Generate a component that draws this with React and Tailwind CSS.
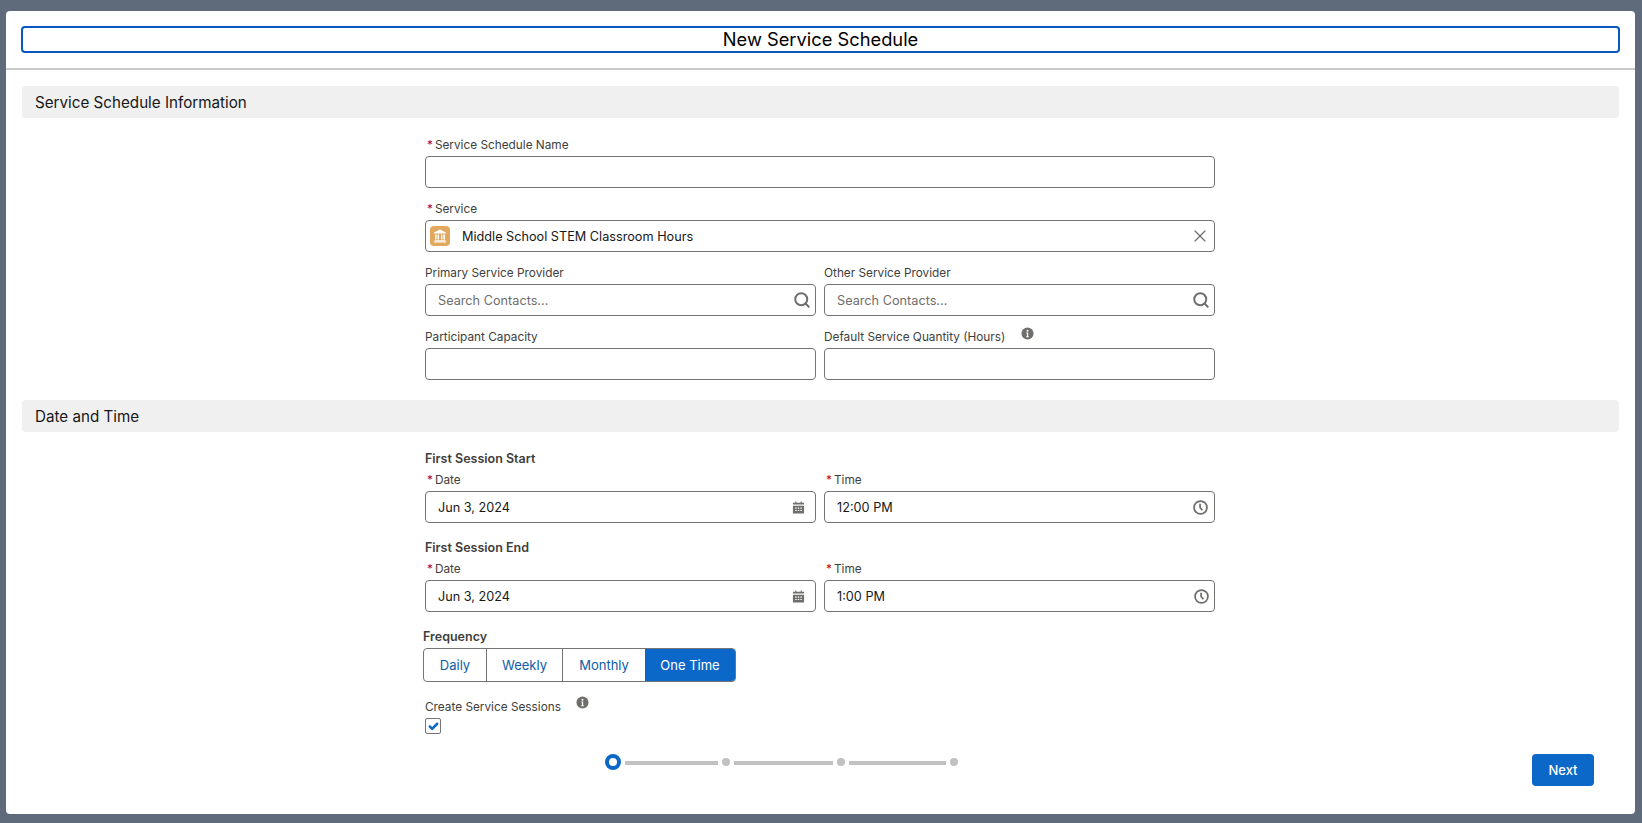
import React from 'react';
import { Search, X, Check } from 'lucide-react';

const InfoIcon = () => (
    <svg viewBox="0 0 14 14" className="w-[13px] h-[13px]">
        <circle cx="7" cy="7" r="6.5" fill="#706e6b" />
        <circle cx="7" cy="4" r="1" fill="#fff" />
        <path d="M5.7 6h2v4h.7v1H5.6v-1h.8V7h-.7z" fill="#fff" />
    </svg>
);

const CalendarIcon = () => (
    <svg viewBox="0 0 14 14" className="w-[13px] h-[13px] mr-[8px] shrink-0">
        <path d="M3.5 0.5h1.2v1.3h4.6V0.5h1.2v1.3H13v2H1v-2h2.5z" fill="#706e6b" />
        <path fillRule="evenodd" d="M1 5h12v8.5H1zM3.5 7v1.3h1.6V7zm2.8 0v1.3h1.5V7zm2.7 0v1.3h1.6V7zM3.5 9.6v1.3h1.6V9.6zm2.8 0v1.3h1.5V9.6zm2.7 0v1.3h1.6V9.6z" fill="#706e6b" />
    </svg>
);

const ClockIcon = () => (
    <svg viewBox="0 0 14 14" className="w-[15px] h-[15px]" fill="none" stroke="#706e6b" strokeWidth="1.6">
        <circle cx="7" cy="7" r="6" />
        <path d="M6.6 3.4V7l2.2 2.6" />
    </svg>
);

const BuildingIcon = () => (
    <svg viewBox="0 0 14 14" className="w-[14px] h-[14px]" fill="#fff">
        <path d="M7 0.5L13 3.5V4.6H1V3.5z" />
        <path d="M2 5.4h1.6v5.2H2zM4.6 5.4h1.4v5.2H4.6zM8 5.4h1.4v5.2H8zM10.4 5.4H12v5.2h-1.6z" />
        <path d="M1.5 11.2h11v1H1.5zM0.8 12.6h12.4v1H0.8z" />
    </svg>
);

const Field = ({ label, required, info, children, className = '' }) => (
    <div className={className}>
        <div className="h-[22px] pt-[2px] flex items-center text-[11.8px] text-[#3e3e3c] leading-none">
            {required && <span className="text-[#ba0517] mr-[2px] ml-[2px]">*</span>}
            <span>{label}</span>
            {info && <span className="ml-[16px] -mt-[10px]"><InfoIcon /></span>}
        </div>
        {children}
    </div>
);

const Input = ({ value, placeholder, right }) => (
    <div className="h-[32px] flex items-center justify-between border border-[#747474] rounded-[4px] bg-white pl-[12px] pr-[5px] text-[12.7px] text-[#181818]">
        {value && <span className="pt-[1px]">{value}</span>}
        {placeholder && <span className="pt-[1px] text-[#706e6b]">{placeholder}</span>}
        <span />
        {right && <span className="flex items-center justify-center w-[16px]">{right}</span>}
    </div>
);

const SectionHeader = ({ title, className = '' }) => (
    <div className={`mx-[16px] h-[32px] pt-[2px] flex items-center rounded-[4px] bg-[#f0f0f0] pl-[13px] text-[15.2px] text-[#181818] ${className}`}>
        {title}
    </div>
);

const Step = () => <span className="w-[8px] h-[8px] rounded-full bg-[#c1c1c1]" />;
const Line = ({ w }) => <span className={`h-[4px] mt-[1px] bg-[#c1c1c1] ${w}`} />;

export default function App() {
    return (
        <div className="h-screen bg-[#5f6b7a] pt-[11px] pb-[9px] pl-[6px] pr-[7px] font-['Inter',sans-serif]">
            <div className="relative h-full bg-white rounded-[4px]">
                <div className="h-[59px] pt-[15px] px-[15px] border-b-2 border-[#c9c9c9]">
                    <div className="h-[27px] pt-[1px] flex items-center justify-center border-2 border-[#0b57c0] rounded-[4px] text-[18.3px] text-black">
                        New Service Schedule
                    </div>
                </div>

                <SectionHeader title="Service Schedule Information" className="mt-[16px]" />
                <div className="w-[790px] ml-[419px] mt-[16px]">
                    <Field label="Service Schedule Name" required className="mb-[10px]">
                        <Input />
                    </Field>
                    <Field label="Service" required className="mb-[10px]">
                        <div className="h-[32px] flex items-center border border-[#747474] rounded-[4px] pl-[4px] pr-[4px] text-[12.7px] text-[#181818]">
                            <span className="w-[20px] h-[20px] rounded-[4px] bg-[#e3a85f] flex items-center justify-center">
                                <BuildingIcon />
                            </span>
                            <span className="ml-[12px] pt-[1px] flex-1">Middle School STEM Classroom Hours</span>
                            <X size={20} strokeWidth={1.4} color="#706e6b" />
                        </div>
                    </Field>
                    <div className="grid grid-cols-2 gap-x-[8px] gap-y-[10px]">
                        <Field label="Primary Service Provider">
                            <Input placeholder="Search Contacts..." right={<Search size={18} strokeWidth={2.6} color="#706e6b" className="shrink-0" />} />
                        </Field>
                        <Field label="Other Service Provider">
                            <Input placeholder="Search Contacts..." right={<Search size={18} strokeWidth={2.6} color="#706e6b" className="shrink-0" />} />
                        </Field>
                        <Field label="Participant Capacity">
                            <Input />
                        </Field>
                        <Field label="Default Service Quantity (Hours)" info>
                            <Input />
                        </Field>
                    </div>
                </div>

                <SectionHeader title="Date and Time" className="mt-[20px]" />
                <div className="w-[790px] ml-[419px] mt-[17px]">
                    <div className="h-[20px] flex items-center text-[12.5px] font-semibold text-[#3e3e3c]">First Session Start</div>
                    <div className="grid grid-cols-2 gap-x-[8px]">
                        <Field label="Date" required>
                            <Input value="Jun 3, 2024" right={<CalendarIcon />} />
                        </Field>
                        <Field label="Time" required>
                            <Input value="12:00 PM" right={<ClockIcon />} />
                        </Field>
                    </div>
                    <div className="h-[20px] mt-[15px] flex items-center text-[12.5px] font-semibold text-[#3e3e3c]">First Session End</div>
                    <div className="grid grid-cols-2 gap-x-[8px]">
                        <Field label="Date" required>
                            <Input value="Jun 3, 2024" right={<CalendarIcon />} />
                        </Field>
                        <Field label="Time" required>
                            <Input value="1:00 PM" right={<ClockIcon />} />
                        </Field>
                    </div>

                    <div className="-ml-[2px] mt-[15px] h-[21px] flex items-center text-[12.5px] font-semibold text-[#3e3e3c]">Frequency</div>
                    <div className="-ml-[2px] flex w-fit h-[34px] border border-[#747474] rounded-[4px] text-[13px] text-[#0b5cab] overflow-hidden">
                        <span className="w-[63px] pt-[2px] flex items-center justify-center border-r border-[#747474]">Daily</span>
                        <span className="w-[76px] pt-[2px] flex items-center justify-center border-r border-[#747474]">Weekly</span>
                        <span className="w-[82px] pt-[2px] flex items-center justify-center">Monthly</span>
                        <span className="w-[90px] pt-[2px] flex items-center justify-center bg-[#0b68c9] text-white">One Time</span>
                    </div>

                    <div className="mt-[14px] h-[22px] pt-[2px] flex items-center text-[11.8px] text-[#3e3e3c]">
                        <span>Create Service Sessions</span>
                        <span className="ml-[15px] -mt-[12px]"><InfoIcon /></span>
                    </div>
                    <span className="flex w-[16px] h-[16px] items-center justify-center border border-[#747474] rounded-[2px]">
                        <Check size={11} strokeWidth={5.5} color="#0b68c9" />
                    </span>
                </div>

                <div className="absolute left-[599px] top-[743px] flex items-center gap-[4px]">
                    <span className="w-[16px] h-[16px] rounded-full border-[4px] border-[#0b68c9] bg-white" />
                    <Line w="w-[93px]" />
                    <Step />
                    <Line w="w-[99px]" />
                    <Step />
                    <Line w="w-[97px]" />
                    <Step />
                </div>

                <button className="absolute left-[1526px] top-[743px] w-[62px] h-[32px] pt-[1px] rounded-[4px] bg-[#0b68c9] text-white text-[13px] font-medium">
                    Next
                </button>
            </div>
        </div>
    );
}
